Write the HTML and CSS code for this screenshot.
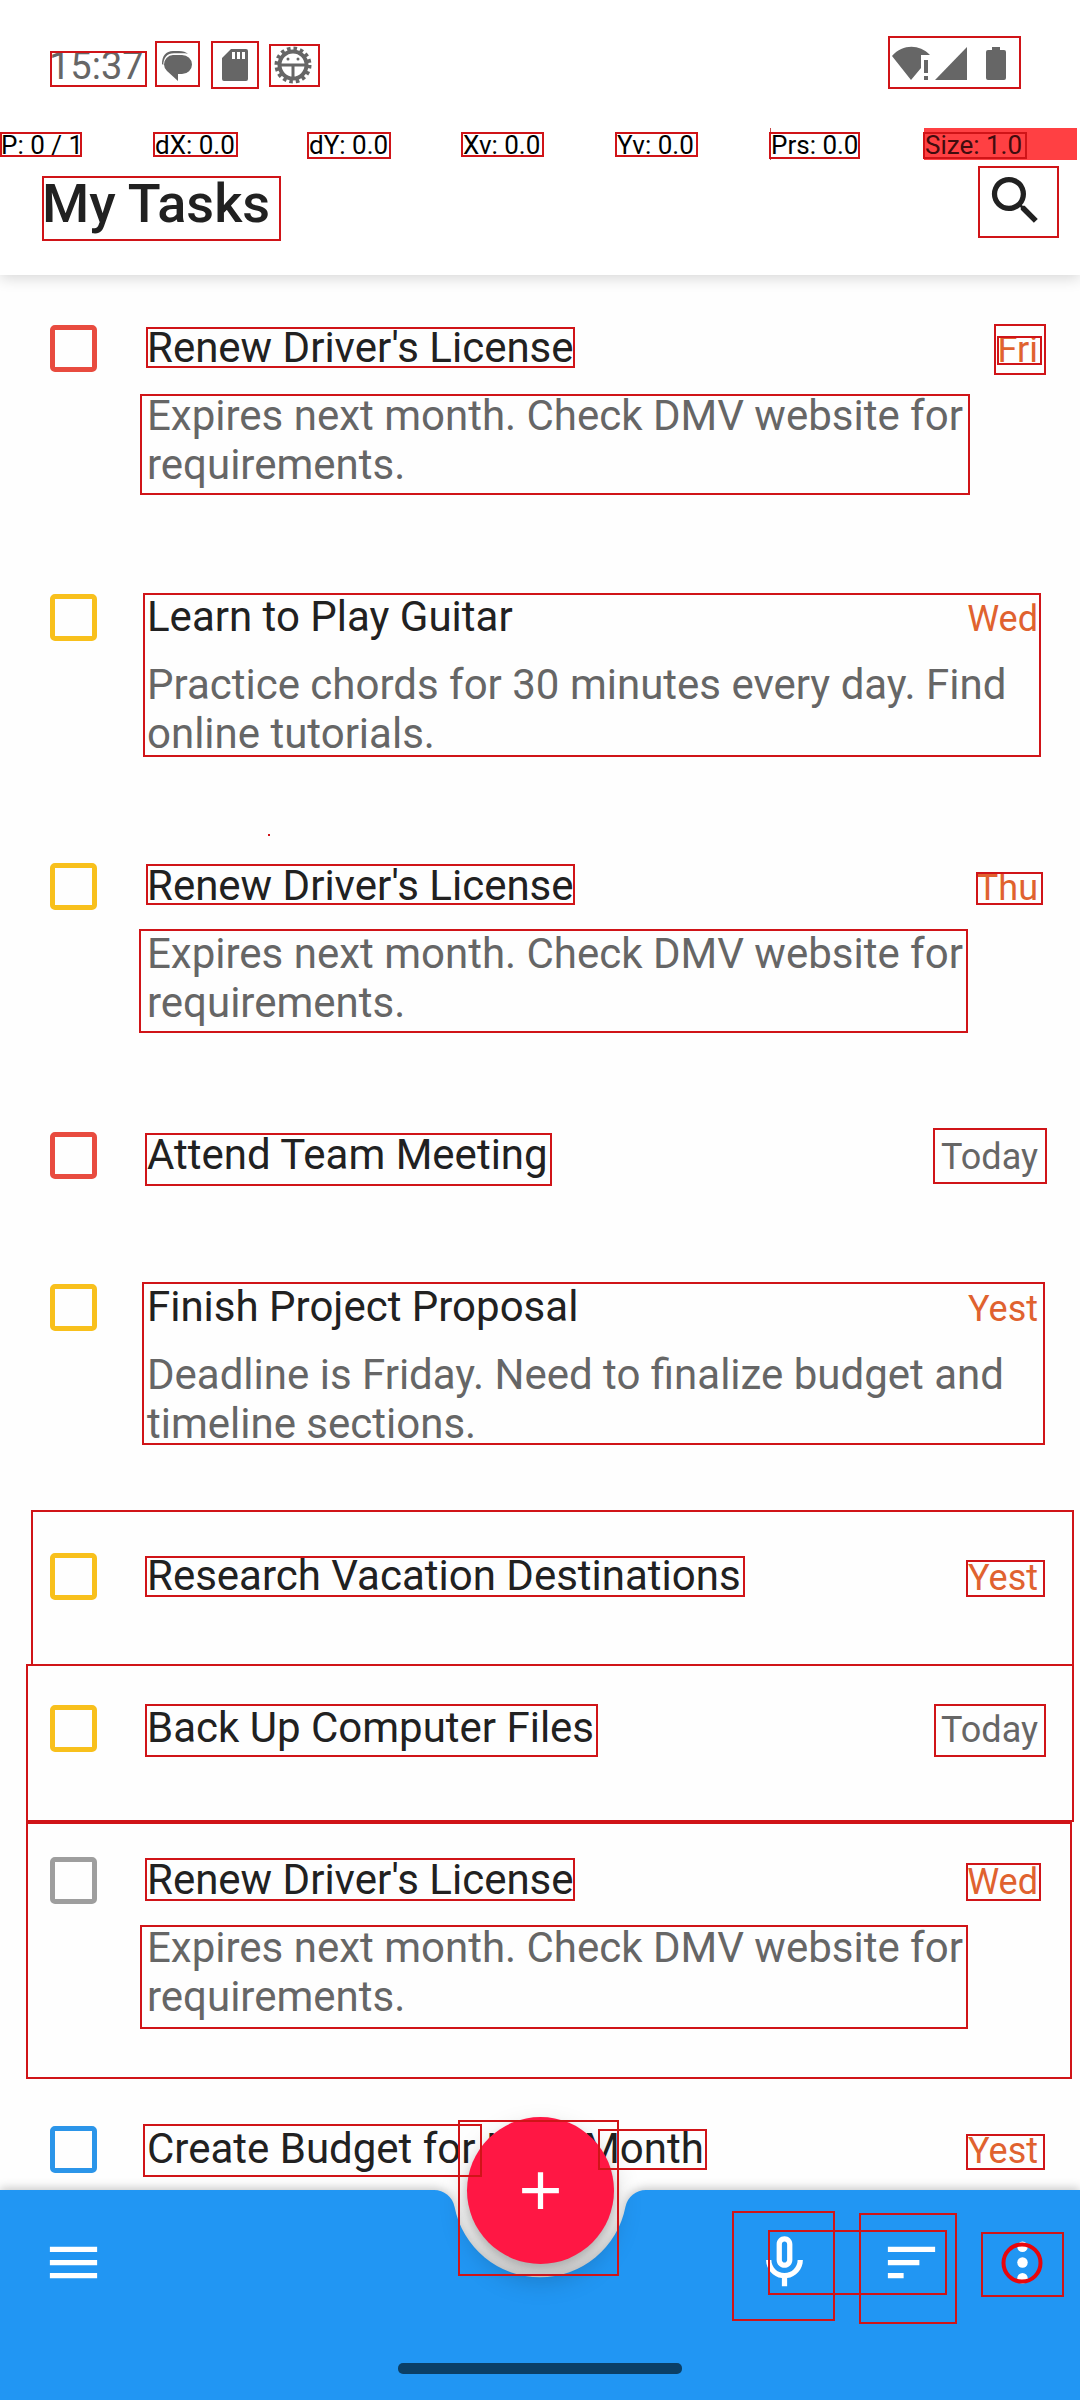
FILE: index.html
```html
<!DOCTYPE html>
<html lang="en">
<head>
<meta charset="utf-8">
<meta name="viewport" content="width=device-width, initial-scale=1">
<title>My Tasks</title>
<link rel="stylesheet" href="styles.css">
</head>
<body>
<div class="app">
  <header class="header">
    <div class="status">
      <div class="status-left">
        <span class="clock">15:37</span>
        <svg class="status-icon" viewBox="0 0 42 42" aria-hidden="true"><path d="M16 10h9a10 9.500 0 0 1 0 19h-4v7L10 26a9 9 0 0 1-3-6.500A9.500 9.500 0 0 1 16 10z"/><path d="M5 19C5 11 9 6 16 6h6c4 0 7 1 9 3-2-.700-4-.700-6-.700h-8C10 8.300 6.300 13 6.300 20z"/></svg>
        <svg class="status-icon" viewBox="0 0 42 42" aria-hidden="true"><path fill-rule="evenodd" d="M16 4h15a2 2 0 0 1 2 2v28a2 2 0 0 1-2 2H9a2 2 0 0 1-2-2V13zM17 7v7h3V7zm5 0v7h3V7zm5 0v7h3V7z"/></svg>
        <svg class="status-icon" viewBox="0 0 42 42" aria-hidden="true"><circle cx="20" cy="20" r="16" fill="none" stroke="#666" stroke-width="5" stroke-dasharray="3.400 2.883"/><circle cx="20" cy="20" r="13.500" fill="none" stroke="#666" stroke-width="4"/><path d="M7 18.500h26v3H7zM18.500 20h3v13h-3z"/><circle cx="15" cy="14" r="1.500"/><circle cx="25" cy="14" r="1.500"/></svg>
      </div>
      <div class="status-right">
        <svg class="status-icon" viewBox="0 0 42 42" aria-hidden="true"><path d="M1 11C12-1 28-1 39 10h-9v13L20 35z"/><path d="M33 15h4v13h-4zM33 31h4v4h-4z"/></svg>
        <svg class="status-icon" viewBox="0 0 42 42" aria-hidden="true"><path d="M34 2v33H2z"/></svg>
        <svg class="status-icon" viewBox="0 0 42 42" aria-hidden="true"><path d="M17 2h8v3h4a2 2 0 0 1 2 2v26a2 2 0 0 1-2 2H13a2 2 0 0 1-2-2V7a2 2 0 0 1 2-2h4z"/></svg>
      </div>
    </div>
    <div class="pointer">
      <span>P: 0 / 1</span><span>dX: 0.0</span><span>dY: 0.0</span><span>Xv: 0.0</span><span>Yv: 0.0</span><span class="pressure">Prs: 0.0</span><span class="size">Size: 1.0</span>
    </div>
    <div class="toolbar">
      <h1 class="title">My Tasks</h1>
      <button class="icon-button dark" type="button" aria-label="Search"><svg viewBox="0 0 24 24"><path d="M15.500 14h-.790l-.280-.270A6.471 6.471 0 0 0 16 9.500 6.500 6.500 0 1 0 9.500 16c1.610 0 3.090-.590 4.230-1.570l.270.280v.790l5 4.990L20.490 19l-4.990-5zm-6 0C7.010 14 5 11.990 5 9.500S7.010 5 9.500 5 14 7.010 14 9.500 11.990 14 9.500 14z"/></svg></button>
    </div>
  </header>

  <main class="list">
    <div class="task">
      <input class="check red" type="checkbox" id="t1">
      <label class="name" for="t1">Renew Driver's License</label><span class="due late">Fri</span>
      <p class="note">Expires next month. Check DMV website for requirements.</p>
    </div>
    <div class="task">
      <input class="check yellow" type="checkbox" id="t2">
      <label class="name" for="t2">Learn to Play Guitar</label><span class="due late">Wed</span>
      <p class="note">Practice chords for 30 minutes every day. Find online tutorials.</p>
    </div>
    <div class="task">
      <input class="check yellow" type="checkbox" id="t3">
      <label class="name" for="t3">Renew Driver's License</label><span class="due late">Thu</span>
      <p class="note">Expires next month. Check DMV website for requirements.</p>
    </div>
    <div class="task">
      <input class="check red" type="checkbox" id="t4">
      <label class="name" for="t4">Attend Team Meeting</label><span class="due">Today</span>
    </div>
    <div class="task">
      <input class="check yellow" type="checkbox" id="t5">
      <label class="name" for="t5">Finish Project Proposal</label><span class="due late">Yest</span>
      <p class="note">Deadline is Friday. Need to finalize budget and timeline sections.</p>
    </div>
    <div class="task">
      <input class="check yellow" type="checkbox" id="t6">
      <label class="name" for="t6">Research Vacation Destinations</label><span class="due late">Yest</span>
    </div>
    <div class="task">
      <input class="check yellow" type="checkbox" id="t7">
      <label class="name" for="t7">Back Up Computer Files</label><span class="due">Today</span>
    </div>
    <div class="task">
      <input class="check gray" type="checkbox" id="t8">
      <label class="name" for="t8">Renew Driver's License</label><span class="due late">Wed</span>
      <p class="note">Expires next month. Check DMV website for requirements.</p>
    </div>
    <div class="task">
      <input class="check blue" type="checkbox" id="t9">
      <label class="name" for="t9">Create Budget for Next Month</label><span class="due late">Yest</span>
    </div>
  </main>

  <nav class="bar">
    <div class="bar-shape" aria-hidden="true">
      <div class="bar-side"></div>
      <svg class="notch" viewBox="0 0 216 210"><path d="M0 0h2a21 21 0 0 1 20.600 16.900A87 87 0 0 0 193.400 16.900 21 21 0 0 1 214 0h2v210H0z"/></svg>
      <div class="bar-side"></div>
    </div>
    <button class="fab" type="button" aria-label="New task"><svg viewBox="0 0 24 24"><path d="M19 13h-6v6h-2v-6H5v-2h6V5h2v6h6z"/></svg></button>
    <div class="actions">
      <button class="icon-button first" type="button" aria-label="Menu"><svg viewBox="0 0 24 24"><path d="M3 18h18v-2H3zm0-5h18v-2H3zm0-7v2h18V6z"/></svg></button>
      <button class="icon-button" type="button" aria-label="Voice"><svg viewBox="0 0 24 24"><path d="M12 14c1.660 0 3-1.340 3-3V5c0-1.660-1.340-3-3-3S9 3.340 9 5v6c0 1.660 1.340 3 3 3zm-1-9c0-.550.450-1 1-1s1 .450 1 1v6c0 .550-.450 1-1 1s-1-.450-1-1V5zm6 6c0 2.760-2.240 5-5 5s-5-2.240-5-5H5c0 3.530 2.610 6.430 6 6.920V21h2v-3.080c3.390-.490 6-3.390 6-6.920z"/></svg></button>
      <button class="icon-button" type="button" aria-label="Sort"><svg viewBox="0 0 24 24"><path d="M3 18h6v-2H3zM3 6v2h18V6zm0 7h12v-2H3z"/></svg></button>
      <button class="icon-button last" type="button" aria-label="More options"><svg viewBox="0 0 24 24"><circle cx="12" cy="6" r="2"/><circle cx="12" cy="12" r="2"/><circle cx="12" cy="18" r="2"/></svg></button>
    </div>
    <div class="home"></div>
  </nav>

  <!-- bounding boxes drawn over the interface -->
  <svg class="boxes" viewBox="0 0 1080 2400" aria-hidden="true">
    <rect x="51" y="52" width="95" height="34"/>
    <rect x="156" y="42" width="43" height="44"/>
    <rect x="212" y="42" width="46" height="46"/>
    <rect x="270" y="45" width="49" height="41"/>
    <rect x="889" y="37" width="131" height="51"/>
    <rect x="1" y="133" width="80" height="23"/>
    <rect x="154" y="133" width="83" height="23"/>
    <rect x="308" y="133" width="82" height="25"/>
    <rect x="462" y="133" width="81" height="23"/>
    <rect x="616" y="133" width="81" height="23"/>
    <rect x="770" y="133" width="89" height="25"/>
    <rect x="924" y="133" width="102" height="25"/>
    <rect x="43" y="177" width="237" height="63"/>
    <rect x="979" y="167" width="79" height="70"/>
    <rect x="147" y="328" width="427" height="39"/>
    <rect x="141" y="395" width="828" height="99"/>
    <rect x="995" y="325" width="50" height="49"/>
    <rect x="998" y="337" width="43" height="27"/>
    <rect x="144" y="594" width="896" height="162"/>
    <path d="M268 835h2"/>
    <rect x="147" y="865" width="427" height="39"/>
    <rect x="140" y="930" width="827" height="102"/>
    <rect x="977" y="873" width="65" height="31"/>
    <rect x="146" y="1134" width="405" height="51"/>
    <rect x="934" y="1129" width="112" height="54"/>
    <rect x="143" y="1283" width="901" height="161"/>
    <path d="M32 1665v-154h1041v154"/>
    <rect x="146" y="1557" width="598" height="39"/>
    <rect x="967" y="1561" width="77" height="35"/>
    <rect x="27" y="1665" width="1046" height="156"/>
    <rect x="146" y="1705" width="451" height="51"/>
    <rect x="935" y="1705" width="110" height="51"/>
    <rect x="27" y="1823" width="1044" height="255"/>
    <rect x="146" y="1859" width="428" height="41"/>
    <rect x="141" y="1926" width="826" height="102"/>
    <rect x="967" y="1864" width="73" height="36"/>
    <rect x="144" y="2125" width="337" height="51"/>
    <rect x="459" y="2121" width="159" height="154"/>
    <rect x="599" y="2130" width="107" height="39"/>
    <rect x="967" y="2135" width="77" height="34"/>
    <rect x="733" y="2212" width="101" height="108"/>
    <rect x="860" y="2214" width="96" height="109"/>
    <rect x="769" y="2231" width="177" height="63"/>
    <rect x="982" y="2233" width="81" height="63"/>
    <circle cx="1022" cy="2263" r="18.500"/>
  </svg>
</div>
</body>
</html>
```
FILE: styles.css
```css
* { box-sizing: border-box; }

body {
  margin: 0;
  background: #fefefe;
  color: #212121;
  font-family: Roboto, "Liberation Sans", sans-serif;
}

button {
  padding: 0;
  border: 0;
  background: none;
}

.app {
  position: relative;
  display: flex;
  flex-direction: column;
  height: 100vh;
  overflow: hidden;
}

.header {
  position: relative;
  z-index: 1;
  flex: none;
  background: #fff;
  box-shadow: 0 3px 14px rgba(0, 0, 0, 0.16);
}

.status {
  display: flex;
  align-items: center;
  justify-content: space-between;
  height: 128px;
  padding: 4px 63px 0 49px;
  color: #666;
}

.status-left {
  display: flex;
  align-items: center;
  gap: 16px;
}

.status-right { display: flex; }

.clock {
  width: 92px;
  font-size: 38px;
  line-height: 42px;
  white-space: nowrap;
}

.status-icon {
  display: block;
  width: 42px;
  height: 42px;
  fill: #666;
}

.pointer {
  display: grid;
  grid-template-columns: repeat(7, 1fr);
  gap: 1px;
  padding-right: 3px;
  color: #000;
  font-size: 26px;
  line-height: 30px;
}

.pointer span { padding: 2px 0 0 1px; }

.pointer .pressure {
  padding-left: 0;
  border-left: 1px solid #c84848;
}

.pointer .size {
  background: #ff4043;
  color: #400c0e;
}

.toolbar {
  display: flex;
  align-items: flex-start;
  justify-content: space-between;
  height: 115px;
  padding: 9px 33px 0 42px;
}

.title {
  margin: 0;
  font-size: 54px;
  font-weight: 500;
  line-height: 70px;
}

.icon-button {
  display: block;
  width: 63px;
  height: 63px;
  fill: #fff;
}

.icon-button svg {
  display: block;
  width: 100%;
  height: 100%;
}

.dark { fill: #212121; }

.list {
  flex: 1;
  min-height: 0;
  overflow: hidden;
  padding-top: 24px;
}

.task {
  display: grid;
  grid-template-columns: 47px 1fr auto;
  column-gap: 50px;
  align-items: baseline;
  padding: 24px 42px 79px 50px;
}

.check {
  appearance: none;
  align-self: start;
  width: 47px;
  height: 47px;
  margin: 2px 0 0;
  border: 5px solid;
  border-radius: 5px;
}

.red { color: #e84b3f; }
.yellow { color: #f8c01c; }
.gray { color: #9e9e9e; }
.blue { color: #2b95e9; }

.name {
  font-size: 42px;
  line-height: 49px;
}

.due {
  color: #666;
  font-size: 36px;
  line-height: 42px;
}

.late { color: #e0622f; }

.note {
  grid-column: 2 / 4;
  margin: 19px 0 0;
  color: #666;
  font-size: 42px;
  line-height: 49px;
}

.bar {
  position: absolute;
  right: 0;
  bottom: 0;
  left: 0;
  z-index: 2;
  height: 210px;
}

.bar-shape {
  position: absolute;
  inset: 0;
  display: flex;
  filter: drop-shadow(0 -2px 5px rgba(0, 0, 0, 0.22));
}

.bar-side {
  flex: 1;
  background: #2196f3;
}

.notch {
  display: block;
  width: 216px;
  height: 210px;
  fill: #2196f3;
}

.fab {
  position: absolute;
  top: -73px;
  left: calc(50% - 73px);
  display: grid;
  place-items: center;
  width: 147px;
  height: 147px;
  border-radius: 50%;
  background: #ff1744;
  box-shadow: 0 14px 28px rgba(0, 0, 0, 0.22), 0 6px 10px rgba(0, 0, 0, 0.16);
  fill: #fff;
}

.fab svg {
  width: 63px;
  height: 63px;
}

.actions {
  position: relative;
  display: flex;
  gap: 64px;
  padding: 41px 26px 0 42px;
}

.first { margin-right: auto; }
.last { margin-left: -16px; }

.home {
  position: absolute;
  bottom: 26px;
  left: calc(50% - 142px);
  width: 284px;
  height: 11px;
  border-radius: 5px;
  background: #0b3f66;
}

.boxes {
  position: absolute;
  top: 0;
  left: 0;
  z-index: 3;
  width: 1080px;
  height: 2400px;
  fill: none;
  stroke: #d01418;
  stroke-width: 2px;
  pointer-events: none;
}

.boxes circle {
  stroke: #e8060c;
  stroke-width: 4px;
}
```
